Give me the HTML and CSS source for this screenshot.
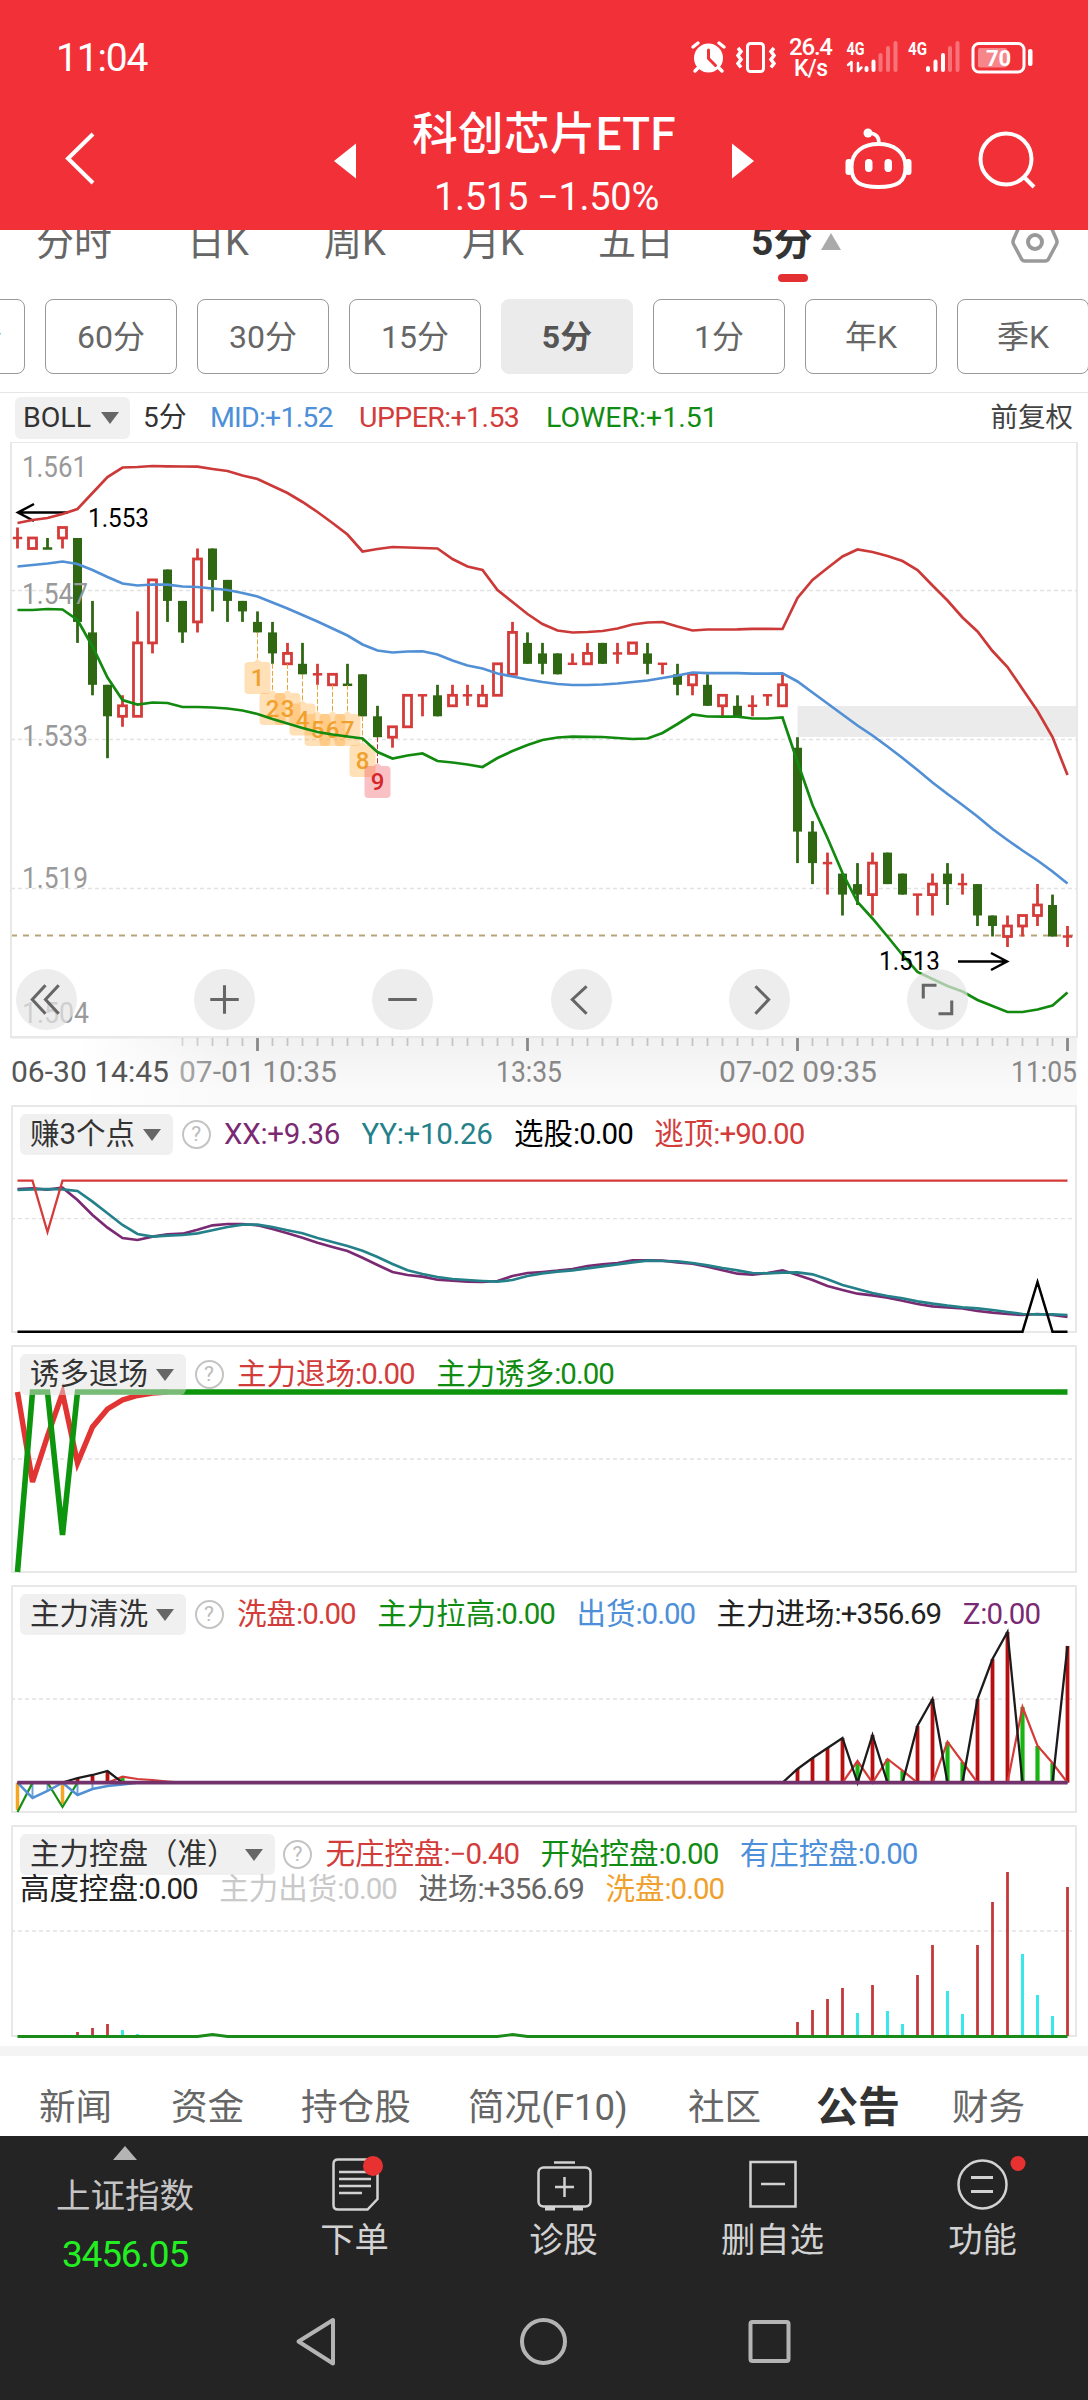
FILE: index.html
```html
<!DOCTYPE html>
<html lang="zh-CN">
<head>
<meta charset="utf-8" />
<title>科创芯片ETF</title>
<link rel="stylesheet" href="styles.css">
</head>
<body>
<div id="header">
	<div class="status">
		<span class="time">11:04</span>
		<svg class="sysicons" width="350" height="60" viewBox="690 30 350 60">
			<!-- 闹钟 -->
			<g fill="none" stroke="#fff" stroke-width="3.5" stroke-linecap="round">
				<circle cx="708.5" cy="58" r="14.5" fill="#fff" stroke="none"/>
				<path d="M693 47l5-4M719 43l5 4M698 68l-3 3M719 68l3 3"/>
				<path d="M708.5 50v8.500l7 7" stroke="#f23038" stroke-width="3"/>
			</g>
			<!-- 振动 -->
			<g fill="none" stroke="#fff" stroke-width="3">
				<rect x="747.500" y="43.500" width="16" height="28" rx="3"/>
				<path d="M738 48l3 3.500-3 4 3 4-3 4 3 4M774 48l-3 3.500 3 4-3 4 3 4-3 4" stroke-width="3.500"/>
			</g>
			<text x="789" y="55" font-size="24" font-weight="500" textLength="44">26.4</text>
			<text x="794" y="76" font-size="23" font-weight="500" textLength="34">K/s</text>
			<text x="846.500" y="55" font-size="19" font-weight="700" textLength="18" lengthAdjust="spacingAndGlyphs">4G</text>
			<text x="908" y="55" font-size="19" font-weight="700" textLength="19" lengthAdjust="spacingAndGlyphs">4G</text>
			<g stroke="#fff" stroke-width="4" stroke-linecap="round">
				<path d="M851.500 63v8M858 63v8" stroke-width="2.500"/>
				<path d="M848 65l3.500-3M858 71l3.500-3.500" stroke-width="2.500"/>
				<path d="M866.500 68v2M873.500 61.500v8.500"/>
				<path d="M880.500 55v15M888 48v22M895.500 43v27" stroke-opacity=".33"/>
				<path d="M928 68v2M935.500 61.500v8.500M943 55v15"/>
				<path d="M950 48v22M957.500 43v27" stroke-opacity=".33"/>
			</g>
			<rect x="973" y="43.500" width="51" height="28.500" rx="6" fill="none" stroke="#fff" stroke-width="3"/>
			<rect x="978" y="48" width="29" height="19.500" rx="2" fill="#fff" fill-opacity=".42"/>
			<rect x="1028" y="49" width="4.500" height="17" rx="2" fill="#fff"/>
			<text x="986" y="65.500" font-size="22" font-weight="700" textLength="25">70</text>
		</svg>
	</div>
	<div class="nav">
		<svg width="334" height="80" viewBox="0 118 334 80"><path d="M93 134L68 158.500 93 183" fill="none" stroke="#fff" stroke-width="4"/></svg>
		<svg width="22" height="80" viewBox="334 118 22 80"><path d="M334 161l22-17.500v35z" fill="#fff"/></svg>
		<div class="title">
			<h1>科创芯片ETF</h1>
			<p>1.515 <span>−1.50%</span></p>
		</div>
		<svg width="22" height="80" viewBox="732 118 22 80"><path d="M754 161l-22-17.500v35z" fill="#fff"/></svg>
		<svg class="robot" width="70" height="80" viewBox="843 118 70 80">
			<g fill="none" stroke="#fff" stroke-width="4">
				<path d="M878.500 144c14 0 27 7 27 23 0 15-8 20-27 20s-27-5-27-20c0-16 13-23 27-23z"/>
				<path d="M868 133c8 0 11 4 11 10" stroke-width="3.500"/>
			</g>
			<circle cx="868" cy="133" r="4.500" fill="#fff"/>
			<rect x="845.500" y="159" width="6.500" height="16" rx="3" fill="#fff"/>
			<rect x="905" y="159" width="6.500" height="16" rx="3" fill="#fff"/>
			<rect x="865" y="159" width="7.500" height="13" rx="3.700" fill="#fff"/>
			<rect x="884.500" y="159" width="7.500" height="13" rx="3.700" fill="#fff"/>
		</svg>
		<svg width="62" height="80" viewBox="976 118 62 80"><g fill="none" stroke="#fff" stroke-width="4"><circle cx="1006" cy="159" r="25.500"/><path d="M1024 177l10 10"/></g></svg>
	</div>
</div>

<div id="period">
	<ul class="tabs">
		<li>分时</li><li>日K</li><li>周K</li><li>月K</li><li>五日</li>
		<li class="on">5分<i class="up"></i><b></b></li>
	</ul>
	<svg class="gear" width="50" height="60" viewBox="1010 220 50 60"><path d="M1024 220.500h22q2 0 3 2l7.500 17q1 2.300 0 4.500l-8 15q-1 2-3.500 2h-20q-2.500 0-3.500-2l-8-15q-1-2.200 0-4.500l7.500-17q1-2 3-2z" fill="none" stroke="#999" stroke-width="3.500"/><circle cx="1035" cy="242" r="7" fill="none" stroke="#999" stroke-width="4"/></svg>
</div>
<ul id="minutes">
	<li>120分</li><li>60分</li><li>30分</li><li>15分</li><li class="on">5分</li><li>1分</li><li>年K</li><li>季K</li>
</ul>

<div id="boll">
	<span class="tag">BOLL<i></i></span>
	<span class="c5">5分</span>
	<span class="blue m1">MID:+1.52</span>
	<span class="red m2">UPPER:+1.53</span>
	<span class="green m3">LOWER:+1.51</span>
	<span class="fq">前复权</span>
</div>
<div id="main">
	<svg id="kline" width="1088" height="663" viewBox="0 442 1088 663"></svg>
	<div class="tools">
		<a><svg viewBox="-30 -30 60 60"><path d="M-1-14L-14 0-1 14M12-14L-1 0 12 14"/></svg></a>
		<a><svg viewBox="-30 -30 60 60"><path d="M-14 0h28M0-14v28"/></svg></a>
		<a><svg viewBox="-30 -30 60 60"><path d="M-14 0h28"/></svg></a>
		<a><svg viewBox="-30 -30 60 60"><path d="M5-13L-9 0 5 14"/></svg></a>
		<a><svg viewBox="-30 -30 60 60"><path d="M-4-13L9 0-4 14"/></svg></a>
		<a><svg viewBox="-30 -30 60 60"><path d="M-14-1v-13h13M14 1v13h-13"/></svg></a>
	</div>
</div>

<div class="panel">
	<svg id="p1" width="1066" height="228" viewBox="11 1105 1066 228"></svg>
	<div class="head">
		<span class="tag">赚3个点<i></i></span><em>?</em>
		<span class="purple wide">XX:+9.36</span>
		<span class="teal wide">YY:+10.26</span>
		<span class="black">选股<i>:0.00</i></span>
		<span class="red">逃顶<i>:+90.00</i></span>
	</div>
</div>
<div class="panel">
	<svg id="p2" width="1066" height="228" viewBox="11 1345 1066 228"></svg>
	<div class="head">
		<span class="tag">诱多退场<i></i></span><em>?</em>
		<span class="red">主力退场<i>:0.00</i></span>
		<span class="green">主力诱多<i>:0.00</i></span>
	</div>
</div>
<div class="panel">
	<svg id="p3" width="1066" height="228" viewBox="11 1585 1066 228"></svg>
	<div class="head">
		<span class="tag">主力清洗<i></i></span><em>?</em>
		<span class="red">洗盘<i>:0.00</i></span>
		<span class="green">主力拉高<i>:0.00</i></span>
		<span class="blue">出货<i>:0.00</i></span>
		<span class="dark">主力进场<i>:+356.69</i></span>
		<span class="purple">Z<i>:0.00</i></span>
	</div>
</div>
<div class="panel last">
	<svg id="p4" width="1066" height="212" viewBox="11 1825 1066 212"></svg>
	<div class="head">
		<span class="tag">主力控盘（准）<i></i></span><em>?</em>
		<span class="red">无庄控盘<i>:−0.40</i></span>
		<span class="green">开始控盘<i>:0.00</i></span>
		<span class="blue">有庄控盘<i>:0.00</i></span>
	</div>
	<div class="head second">
		<span class="dark">高度控盘<i>:0.00</i></span>
		<span class="light">主力出货<i>:0.00</i></span>
		<span class="gray">进场<i>:+356.69</i></span>
		<span class="orange">洗盘<i>:0.00</i></span>
	</div>
</div>

<ul id="info">
	<li>新闻</li><li>资金</li><li>持仓股</li><li>简况(F10)</li><li>社区</li><li class="on">公告</li><li>财务</li>
</ul>

<div id="footer">
	<div class="bar">
		<div class="index">
			<i></i>
			<p>上证指数</p>
			<strong>3456.05</strong>
		</div>
		<a>
			<svg width="60" height="60" viewBox="325 2152 60 60"><g fill="none" stroke="#d2d2d2" stroke-width="2.500"><path d="M338 2159.500h35q4.500 0 4.500 4.500v35l-10 10.500h-29.500q-4.500 0-4.500-4.500v-41q0-4.500 4.500-4.500z"/><path d="M339 2172h32M339 2179h32M339 2186h32M339 2193h23"/></g><circle cx="373" cy="2166" r="10" fill="#e83131"/></svg>
			下单
		</a>
		<a>
			<svg width="60" height="60" viewBox="534 2152 60 60"><g fill="none" stroke="#d2d2d2" stroke-width="2.500"><rect x="538.500" y="2167.500" width="52" height="39" rx="5"/><path d="M554 2162.500h21M564.500 2177v20M555 2187h19"/><path d="M545 2208.500h10M573 2208.500h10" stroke-width="4"/></g></svg>
			诊股
		</a>
		<a>
			<svg width="60" height="60" viewBox="743 2152 60 60"><path d="M750.500 2162h45v44.500h-45zM761 2184h24" fill="none" stroke="#d2d2d2" stroke-width="2.500"/></svg>
			删自选
		</a>
		<a>
			<svg width="80" height="60" viewBox="943 2152 80 60"><g fill="none" stroke="#d2d2d2" stroke-width="2.500"><circle cx="982.500" cy="2184.500" r="24"/><path d="M971 2177.500h22M971 2191.500h22" stroke-width="3"/></g><circle cx="1018" cy="2163.500" r="7.500" fill="#e83131"/></svg>
			功能
		</a>
	</div>
	<div class="sys">
		<svg width="44" height="50" viewBox="295 2317 44 50"><path d="M333 2320v43.500L298.500 2341.500z"/></svg>
		<svg width="50" height="50" viewBox="519 2317 50 50"><circle cx="543.500" cy="2341.500" r="21.500"/></svg>
		<svg width="44" height="50" viewBox="748 2317 44 50"><rect x="750.500" y="2322" width="38" height="39" rx="2"/></svg>
	</div>
</div>

<script>
var RED='#d53b38',GREEN='#2f6713';
function $(id){return document.getElementById(id);}
function X(i){return 17.5+15*i;}
//价格刻度转坐标, 0=1.515, 每格0.001
function Y(t){return +(936.5-10.487*t).toFixed(1);}
function line(ys,color,w){
	var p=[];
	for(var i=0;i<ys.length;i++){
		p.push(X(i)+','+ys[i]);
	}
	return '<polyline points="'+p.join(' ')+'" fill="none" stroke="'+color+'" stroke-width="'+w+'"/>';
}
function path(d,color,w,more){
	return '<path d="'+d+'" fill="none" stroke="'+color+'" stroke-width="'+w+'" '+(more||'')+'/>';
}
function text(x,y,s,len,size,color){
	return '<text x="'+x+'" y="'+y+'" font-size="'+size+'" fill="'+color+'" textLength="'+len+'" lengthAdjust="spacingAndGlyphs">'+s+'</text>';
}
function grid(y){
	return path('M11 '+y+'H1077','#e2e2e2',1.3,'stroke-dasharray="4 3"');
}
//基线为base, 其余点由pts给出
function sparse(base,pts){
	var a=[];
	for(var i=0;i<71;i++){
		a.push(pts[i]===undefined?base:pts[i]);
	}
	return a;
}
function bars(base,pts,color,w){
	var h='';
	for(var k in pts){
		h+=path('M'+X(+k)+' '+base+'V'+pts[k],color,w);
	}
	return h;
}

//K线: 涨1跌0, 实体上, 实体下, 最高, 最低
var k=[[1,38,38,39,37],[1,38,37,38,37],[0,37,37,38,37],[1,39,38,39,37],[0,38,30,38,28],[0,29,24,32,23],[0,24,21,24,17],[1,22,21,23,20],[1,28,21,31,21],[1,34,28,34,27],
[0,35,32,35,30],[0,32,29,32,28],[1,36,30,37,29],[0,37,34,37,31],[0,34,32,34,30],[0,32,31,32,30],[0,30,29,31,29],[0,29,27,30,26],[1,27,26,28,26],[0,26,25,28,25],
[1,25,25,26,24],[1,25,24,25,24],[0,24,24,26,24],[0,25,21,25,21],[0,21,19,22,19],[1,20,19,20,18],[1,23,20,23,20],[1,23,23,23,21],[0,23,21,24,21],[1,23,22,24,22],
[1,23,23,24,22],[1,23,22,24,22],[1,26,23,26,23],[1,29,25,30,25],[0,28,26,29,26],[0,27,26,28,25],[0,27,25,27,25],[1,26,26,27,26],[1,27,26,28,26],[0,28,26,28,26],
[1,27,27,28,26],[1,28,27,28,27],[0,27,26,28,25],[1,26,26,26,25],[0,25,24,26,23],[1,25,24,25,23],[0,24,22,25,22],[1,23,22,23,21],[0,22,21,23,21],[1,22,22,23,21],
[1,23,23,23,22],[1,24,22,25,22],[0,18,10,19,7],[0,10,7,11,5],[1,7,7,8,4],[0,6,4,6,2],[0,5,4,7,3],[1,7,4,8,2],[0,8,5,8,5],[0,6,4,6,4],
[1,4,4,4,2],[1,5,4,6,2],[0,6,5,7,3],[1,5,5,6,4],[0,5,2,5,1],[0,2,1,2,0],[1,1,0,2,-1],[1,2,1,2,0],[1,3,2,5,1],[0,3,0,4,0],[1,0,0,1,-1]];
var upper=[523,520,518,514,509,493,477,467.5,467,466,466.3,466.5,466.7,469,471,475.5,479,486,493,502,512,523,534.5,551.5,549,547,547.5,548,548.5,559,566.5,570,590,602,614,624,630.5,632.5,632,631,628.5,624.5,622.5,622,626.5,630.5,629.5,629.5,629.4,628.8,628.8,629,598,580,568,556.5,549.5,552,556,561,570,585.5,600.5,617.5,631.5,651,667,689,711,737,775];
var mid=[566.5,565,563.5,561.5,564,570,577,583.5,585.5,584.5,584.7,586.5,587,588.5,590,593,596.5,602.5,608.5,615,621.5,628.5,635.5,644.5,650.5,652.5,651.5,651.3,654.5,660.5,665.5,668.5,673.5,676.5,679.5,682,684,685,685,684.5,683.5,682,680.5,678,675.5,672.5,673.2,673.2,673.2,673.6,673.6,673.3,681.5,692.5,703.5,714.5,725.5,735.5,746.5,758,770,782.5,794,805,816.5,829,840,850.5,860.5,871.5,883.5];
var lower=[610,610,609,609.5,620,646.5,677.5,700,704.5,702.5,703,707,707,707.5,708.5,710.5,714,719,723.5,728,732,734.5,736.5,738.5,752,758.5,755.5,753.5,761,762.5,764.5,767,758,751,745,740,737.5,736.7,736.9,737,738,739,738.5,733,724,714.5,716.5,716.7,716.7,718.5,718.5,717.5,762,805,838,873,902,918.5,936.5,955,972,979,986,991.5,1000,1006,1012,1012,1009.5,1005.5,992.5];

function drawK(){
	var h='<defs><linearGradient id="g1" x2="0" y2="1"><stop offset="0" stop-color="#f1f1f1"/><stop offset=".8" stop-color="#fafafa"/></linearGradient>'+
		'<linearGradient id="g2"><stop offset=".35" stop-color="#fff"/><stop offset="1" stop-color="#fff" stop-opacity="0"/></linearGradient></defs>';
	h+='<rect x="11" y="1038" width="1066" height="67" fill="url(#g1)"/>';
	h+='<rect x="797.5" y="706" width="279" height="31" fill="#ebebeb"/>';
	h+=grid(590.5)+grid(739.5)+grid(888.5);
	h+=path('M11 935.5H1077','#b9a577',1.8,'stroke-dasharray="6 6"');
	h+='<rect x="11" y="442" width="1066" height="595" fill="none" stroke="#e8e8e8" stroke-width="2"/>';
	for(var i=0;i<k.length;i++){
		var d=k[i],x=X(i),a=Y(d[1]),b=Y(d[2]),c=d[0]?RED:GREEN;
		if(d[1]==d[2]){
			h+=path('M'+(x-4.7)+' '+a+'h9.4',c,2.5)+path('M'+x+' '+Y(d[3])+'V'+Y(d[4]),c,2.8);
		}else if(d[0]){
			h+=path('M'+x+' '+Y(d[3])+'V'+a+'M'+x+' '+b+'V'+Y(d[4]),c,2.8);
			h+='<rect x="'+(x-4)+'" y="'+a+'" width="8" height="'+(b-a)+'" fill="#fff" stroke="'+c+'" stroke-width="2.8"/>';
		}else{
			h+=path('M'+x+' '+Y(d[3])+'V'+Y(d[4]),c,2.8);
			h+='<rect x="'+(x-4.5)+'" y="'+a+'" width="9" height="'+(b-a)+'" fill="'+c+'"/>';
		}
	}
	h+=text(22,477,'1.561',65,29,'#999')+text(22,604,'1.547',66,29,'#999')+text(22,746,'1.533',66,29,'#999')+text(22,888,'1.519',66,29,'#999')+text(22,1023,'1.504',67,29,'#999');
	h+=path('M18 512.500H68M34 504L18 512.500 34 521','#000',2.5)+text(88,527,'1.553',61,25,'#000');
	//九转序列
	var top=[659,690,690,700.5,711,711,711,742,763];
	for(i=0;i<9;i++){
		var mx=X(16+i),t=top[i],last=i==8;
		h+=path('M'+mx+' '+Y(k[16+i][4])+'V'+t,last?'#c8322f':'#e3a63c',1,'stroke-dasharray="5 2"');
		h+='<path d="M'+mx+' '+t+'l4 3h5q4 0 4 4v24q0 4-4 4h-18q-4 0-4-4v-24q0-4 4-4h5z" fill="'+(last?'#ee4a50':'#ffa42b')+'" fill-opacity=".34"/>';
		h+='<text x="'+mx+'" y="'+(t+27)+'" font-size="24" text-anchor="middle" font-weight="500" fill="'+(last?'#d4252b':'#f0a02c')+'">'+(i+1)+'</text>';
	}
	h+=line(upper,'#cb3a38',2.7)+line(mid,'#5190d5',2.7)+line(lower,'#12890f',2.7);
	h+=text(879,970,'1.513',61,25,'#000')+path('M958 961.5H1006M991 953l16 8.500-16 8.500','#000',2.5);
	//时间轴
	for(i=11;i<=70;i++){
		var big=i%18==16;
		h+=path('M'+X(i)+' 1038V'+(big?1051:1046),big?'#888':'#c4c4c4',big?2.8:1.8);
	}
	h+=text(179,1082,'07-01 10:35',158,29,'#888')+text(496,1082,'13:35',66,29,'#888')+text(719,1082,'07-02 09:35',158,29,'#888')+text(1011,1082,'11:05',66,29,'#888');
	h+='<rect x="0" y="1039" width="225" height="66" fill="url(#g2)"/>'+text(11,1082,'06-30 14:45',158,29,'#555');
	$('kline').innerHTML=h;
}

function zoomY(top,arr){
	for(var i=0;i<arr.length;i++){
		arr[i]=+(top+arr[i]/3).toFixed(1);
	}
	return arr;
}
function drawP1(){
	var xx=zoomY(1090,[297,295,299,293,330,375,413,444,450,440,433,431,419,406,402,402,406,417,430,443,458,471,483,503,525,546,555,560,569,572,575,576,573,558,549,546,542,537,528,523,519,511,511,512,517,521,530,541,551,554,549,541,555,570,588,600,611,616,623,632,642,649,652,655,663,668,672,675,672,675,681]);
	var yy=zoomY(1090,[300,298,297,298,303,335,370,405,432,440,437,435,430,421,411,404,404,411,421,430,444,456,468,482,501,522,541,552,561,567,570,573,575,570,558,550,545,541,535,529,523,517,512,513,514,519,526,534,541,549,550,548,547,553,568,585,597,609,618,625,634,641,647,652,655,660,666,672,673,673,675]);
	var h=grid(1218.7);
	h+=line(xx,'#7a2a72',2.7)+line(yy,'#24818a',2.7);
	h+=line(sparse(1180.7,{2:1232}),RED,2.3);
	h+=line(sparse(1331.7,{68:1282}),'#000',2.5);
	$('p1').innerHTML=h;
}
function drawP2(){
	var h=grid(1459);
	h+=line([1392,1482,1436,1393,1463,1427,1409,1400,1395.5,1393,1392],'#e23432',5.4);
	h+=line(sparse(1392,{0:1572,3:1535}),'#0d950d',5.6);
	$('p2').innerHTML=h;
}
function drawP3(){
	var b=1782.7,h=grid(1699);
	h+=bars(b,{0:1810,3:1804},'#f5a623',3.5);
	h+=bars(b,{1:1797,2:1791,4:1794,5:1789},'#6ea3e0',2);
	h+=bars(b,{4:1778,5:1775,6:1771,52:1769,53:1758,54:1748,55:1738,57:1735,60:1726,61:1699,64:1699,65:1659,66:1632,70:1646},'#b80f10',3.8);
	h+=bars(b,{7:1777,56:1762,58:1759,59:1771,62:1742,63:1762,67:1707,68:1746,69:1763},'#18b512',4.2);
	h+=line(sparse(b,{7:1776.7,8:1779,9:1780,10:1781.5,56:1761,58:1759,59:1770.7,62:1741.7,63:1762,67:1707,68:1745.7,69:1763}),RED,2.2);
	h+=line(sparse(b,{0:1812,3:1807}),'#188f16',2.2);
	h+=line(sparse(b,{1:1798,2:1791,4:1795,5:1789,6:1786,7:1784.5}),'#5190d5',2.5);
	h+=line(sparse(b,{4:1778,5:1775,6:1771,52:1769,53:1758,54:1748,55:1738,57:1735,60:1725.7,61:1699,64:1699,65:1659,66:1632,70:1646}),'#1c1c1c',2.3);
	h+=path('M17.5 '+b+'H1067.5','#73326b',3.8);
	$('p3').innerHTML=h;
}
function drawP4(){
	var b=2036,h=grid(1931);
	h+=bars(b,{4:2032,5:2028,6:2024,52:2022,53:2010,54:1999,55:1988,57:1985,60:1975,61:1945,64:1945,65:1902,66:1872,70:1887},'#c5383a',2.8);
	h+=bars(b,{7:2030,8:2034,56:2013,58:2011,59:2024,62:1991,63:2014,67:1954,68:1995,69:2016},'#3ae8ec',3);
	h+=line(sparse(b+.5,{13:2034.5,33:2034.5}),'#1a8a18',2.8);
	$('p4').innerHTML=h;
}
drawK();
drawP1();
drawP2();
drawP3();
drawP4();
</script>
</body>
</html>
```

FILE: styles.css
```css
*{margin:0;padding:0;box-sizing:border-box;}
body{width:1088px;height:2400px;overflow:hidden;background:#fff;font-family:Roboto,"Noto Sans CJK SC",sans-serif;color:#333;}
ul{list-style:none;}
i,em{font-style:normal;}
svg{display:block;flex:none;}
svg text{font-family:Roboto,"Noto Sans CJK SC",sans-serif;}
.red{color:#d23c3a;}
.green{color:#118c12;}
.blue{color:#4d8fd8;}
.purple{color:#7a2a72;}
.teal{color:#24818a;}
.black{color:#000;}
.dark{color:#222;}
.gray{color:#666;}
.light{color:#c9c9c9;}
.orange{color:#f0a02c;}

/* 顶部 */
#header{height:230px;background:#f23038;color:#fff;}
.status{height:90px;padding:30px 48px 0 57px;display:flex;justify-content:space-between;}
.status .time{font-size:39px;line-height:57px;letter-spacing:-1.200px;margin-left:-1px;}
.sysicons{fill:#fff;}
.nav{display:flex;height:140px;padding-top:28px;}
.nav .title{width:376px;text-align:center;margin-top:-14px;white-space:nowrap;}
.title h1{font-size:45.500px;line-height:62px;font-weight:500;letter-spacing:.4px;}
.title p{font-size:38px;line-height:60px;padding-left:5px;letter-spacing:-.3px;margin-top:1px;}
.nav .robot{margin:0 63px 0 89px;}

/* 周期 */
#period{height:69px;display:flex;justify-content:space-between;padding:0 28px 0 36px;overflow:hidden;}
#period .gear{margin-top:-10px;}
.tabs{display:grid;grid-template-columns:151px 137px 138px 136px 153px 100px;font-size:38px;line-height:56px;color:#666;margin-top:-16px;height:85px;}
.tabs .on{color:#333;font-weight:700;font-size:39px;white-space:nowrap;}
.tabs .up{display:inline-block;border:10.500px solid transparent;border-top:0;border-bottom:17px solid #aaa;margin-left:9px;vertical-align:5px;}
.tabs b{display:block;width:30px;height:8px;border-radius:4px;background:#e33033;margin:4px 0 0 27px;}
#minutes{display:flex;gap:20px;width:1241px;margin-left:-107px;height:75px;}
#minutes li{width:132px;flex:none;height:75px;border:1.500px solid #999;border-radius:8px;text-align:center;font-size:32px;line-height:75px;color:#666;}
#minutes .on{background:#ebebeb;border-color:#ebebeb;color:#555;font-weight:700;}

/* 主图 */
#boll{height:50px;margin-top:18px;border-top:1.500px solid #e6e6e6;display:flex;align-items:center;padding:0 15px 0 15px;font-size:28.500px;line-height:42px;white-space:nowrap;}
.tag{display:flex;align-items:center;background:rgba(225,225,225,.5);border-radius:6px;color:#333;height:42px;line-height:42px;}
.tag i{border:9px solid transparent;border-bottom:0;border-top:12px solid #666;}
#boll .tag{width:115px;padding-left:8px;}
#boll .tag i{margin-left:10px;}
#boll .c5{margin-left:13px;width:67px;font-size:28px;}
#boll .m1{width:149px;letter-spacing:-.8px;}
#boll .m2{width:187px;letter-spacing:-.6px;}
#boll .m3{letter-spacing:0;}
#boll .fq{margin-left:auto;font-size:27.500px;color:#444;}
#main{position:relative;height:663px;}
.tools{position:absolute;left:16px;top:527px;width:952px;display:flex;justify-content:space-between;}
.tools a{width:61px;height:61px;border-radius:50%;background:rgba(230,230,230,.7);}
.tools svg{width:61px;height:61px;fill:none;stroke:#666;stroke-width:3;}

/* 指标 */
.panel{position:relative;width:1066px;height:228px;margin:0 11px 12px;border:2px solid #e8e8e8;padding:7px;}
.panel>svg{position:absolute;left:-2px;top:-2px;overflow:visible;}
.panel.last{height:212px;margin-bottom:9px;}
.head{position:relative;display:flex;align-items:center;gap:21.500px;height:41px;font-size:29.500px;line-height:41px;white-space:nowrap;}
.head .tag{padding:0 12px 0 10px;height:41px;line-height:41px;}
.head .tag i{margin-left:8px;}
.head em{width:29px;height:29px;border:2.500px solid #c4c4c4;border-radius:50%;color:#bbb;font-size:21px;line-height:25px;text-align:center;margin:0 -8px 0 -13px;}
.head span>i{letter-spacing:-1px;}
.head .wide{letter-spacing:-.3px;}
.head.second{height:28px;line-height:28px;}

/* 资讯 */
#info{height:90px;border-top:10px solid #f4f4f4;display:grid;grid-template-columns:132px 130px 167px 220px 128px 136px 120px;padding-left:39px;font-size:36.600px;line-height:104px;color:#666;white-space:nowrap;overflow:hidden;}
#info .on{font-size:42px;font-weight:700;color:#333;}

/* 底部 */
#footer{height:264px;background:#242424;color:#d2d2d2;}
.bar{display:grid;grid-template-columns:250px 209px 209px 209px 211px;height:150px;}
.bar .index{display:flex;flex-direction:column;align-items:center;}
.bar .index i{border:12.500px solid transparent;border-top:0;border-bottom:14px solid #b4b4b4;margin-top:10px;}
.bar .index p{font-size:34.500px;line-height:50px;margin-top:11px;color:#c4c4c4;}
.bar .index strong{font-size:37px;font-weight:400;line-height:50px;margin-top:9px;letter-spacing:-1.200px;color:#22ee22;}
.bar a{display:flex;flex-direction:column;align-items:center;font-size:34.300px;line-height:50px;padding-top:16px;}
.bar svg{margin-bottom:3px;overflow:visible;}
.sys{display:flex;padding:31px 0 0 295px;fill:none;stroke:#b4b4b4;stroke-width:4;stroke-linejoin:round;}
.sys svg:nth-child(2){margin-left:180px;}
.sys svg:nth-child(3){margin-left:179px;}
```
